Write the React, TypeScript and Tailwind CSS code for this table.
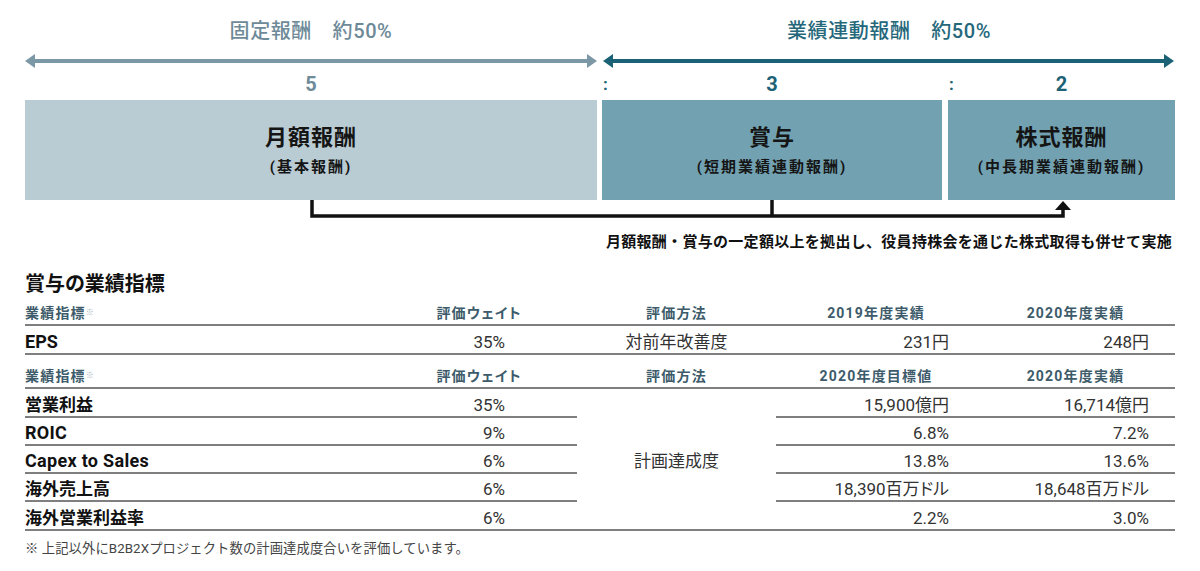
import React from "react";

function Arrow({ w, color }: { w: number; color: string }) {
  return (
    <svg width={w} height={14} viewBox={`0 0 ${w} 14`} className="block">
      <rect x={8} y={5} width={w - 16} height={4} fill={color} />
      <polygon points={`0,7 10,0 10,14`} fill={color} />
      <polygon points={`${w},7 ${w - 10},0 ${w - 10},14`} fill={color} />
    </svg>
  );
}

const grid = "grid grid-cols-[410px_142px_199px_200px_199px]";
const line = "border-b-2 border-[#7f7f7f]";
const hdr = "text-[14px] leading-[20px] font-bold tracking-[1.2px] text-[#3d5b6a]";
const lbl = "text-[17px] leading-[22px] font-bold text-[#111]";
const val = "text-[17px] leading-[22px] text-[#333]";

function Mark() {
  return <span className="text-[8px] align-top text-[#a3b3bb] tracking-normal">※</span>;
}

const rows = [
  ["営業利益", "35%", "15,900億円", "16,714億円", false],
  ["ROIC", "9%", "6.8%", "7.2%", true],
  ["Capex to Sales", "6%", "13.8%", "13.6%", true],
  ["海外売上高", "6%", "18,390百万ドル", "18,648百万ドル", false],
  ["海外営業利益率", "6%", "2.2%", "3.0%", false],
] as const;

export default function App() {
  return (
    <div className="w-[1200px] h-[571px] bg-white overflow-hidden font-['Roboto','Noto_Sans_CJK_JP',sans-serif] [font-feature-settings:'palt']">
      <div className="ml-[25px] w-[1150px]">
        {/* Titles */}
        <div className="flex gap-[6px] pt-[19px]">
          <div className="w-[572px] text-center text-[20px] leading-[24px] font-medium tracking-[0.6px] text-[#6e8a98]">
            固定報酬　約50%
          </div>
          <div className="w-[572px] text-center text-[20px] leading-[24px] font-medium tracking-[0.6px] text-[#26687b]">
            業績連動報酬　約50%
          </div>
        </div>

        {/* Arrows */}
        <div className="flex gap-[6px] mt-[11px]">
          <Arrow w={572} color="#7c97a5" />
          <Arrow w={571} color="#1c6276" />
        </div>

        {/* Ratio numbers */}
        <div className="flex mt-[4px] text-[20px] leading-[24px] font-bold">
          <div className="w-[572px] text-center text-[#6f8a99]">5</div>
          <div className="ml-[5px] w-[340px] flex text-[#1c6276]">
            <span className="w-[8px] pl-[1px] text-[17px]">:</span>
            <span className="flex-1 text-center">3</span>
            <span className="w-[8px]" />
          </div>
          <div className="ml-[6px] w-[227px] flex text-[#1c6276]">
            <span className="w-[8px] pl-[1px] text-[17px]">:</span>
            <span className="flex-1 text-center">2</span>
            <span className="w-[8px]" />
          </div>
        </div>

        {/* Boxes */}
        <div className="flex mt-[4px] h-[100px] text-[#151515]">
          <div className="w-[572px] bg-[#b9cbd3] flex flex-col items-center pt-[25px]">
            <div className="text-[22px] leading-[26px] font-bold tracking-[1px]">月額報酬</div>
            <div className="mt-[6px] text-[15px] leading-[20px] font-bold tracking-[2px]">(基本報酬)</div>
          </div>
          <div className="ml-[5px] w-[340px] bg-[#72a2b2] flex flex-col items-center pt-[25px]">
            <div className="text-[22px] leading-[26px] font-bold tracking-[1px]">賞与</div>
            <div className="mt-[6px] text-[15px] leading-[20px] font-bold tracking-[2px]">(短期業績連動報酬)</div>
          </div>
          <div className="ml-[6px] w-[227px] bg-[#72a2b2] flex flex-col items-center pt-[25px]">
            <div className="text-[22px] leading-[26px] font-bold tracking-[1px]">株式報酬</div>
            <div className="mt-[6px] text-[15px] leading-[20px] font-bold tracking-[2px]">(中長期業績連動報酬)</div>
          </div>
        </div>

        {/* Bracket connector */}
        <svg width={1150} height={20} viewBox="0 0 1150 20" className="block">
          <path d="M287 0 V16 H1038 V8" stroke="#111" strokeWidth={3.5} fill="none" strokeLinejoin="miter" />
          <path d="M747 0 V16" stroke="#111" strokeWidth={3.5} fill="none" />
          <polygon points="1038,1 1030,10 1046,10" fill="#111" />
        </svg>

        <div className="mt-[12px] pr-[3px] text-right text-[15px] leading-[20px] font-bold tracking-[0.3px] text-[#111] [font-feature-settings:normal]">
          月額報酬・賞与の一定額以上を拠出し、役員持株会を通じた株式取得も併せて実施
        </div>

        {/* Section title */}
        <div className="mt-[19px] text-[20px] leading-[26px] font-bold text-[#111]">賞与の業績指標</div>

        {/* Table 1 */}
        <div className={`${grid} grid-rows-[29px_29px]`}>
          <div className={`${line} ${hdr} flex items-center pt-[4px]`}>
            <span>
              業績指標
              <Mark />
            </span>
          </div>
          <div className={`${line} ${hdr} flex items-center justify-center pt-[4px] pr-[54px]`}>評価ウェイト</div>
          <div className={`${line} ${hdr} flex items-center justify-center pt-[4px]`}>評価方法</div>
          <div className={`${line} ${hdr} flex items-center justify-center pt-[4px]`}>2019年度実績</div>
          <div className={`${line} ${hdr} flex items-center justify-center pt-[4px]`}>2020年度実績</div>

          <div className={`${line} text-[18px] leading-[22px] font-bold text-[#111] flex items-center pt-[4px]`}>EPS</div>
          <div className={`${line} ${val} flex items-center justify-end pt-[4px] pr-[72px]`}>35%</div>
          <div className={`${line} ${val} flex items-center justify-center pt-[4px]`}>対前年改善度</div>
          <div className={`${line} ${val} flex items-center justify-end pt-[4px] pr-[27px]`}>231円</div>
          <div className={`${line} ${val} flex items-center justify-end pt-[4px] pr-[26px]`}>248円</div>
        </div>

        {/* Table 2 */}
        <div className={`${grid} grid-rows-[34px_29px_28px_28px_28px_29px]`}>
          <div className={`${line} ${hdr} flex items-center pt-[10px]`}>
            <span>
              業績指標
              <Mark />
            </span>
          </div>
          <div className={`${line} ${hdr} flex items-center justify-center pt-[10px] pr-[54px]`}>評価ウェイト</div>
          <div className={`${line} ${hdr} flex items-center justify-center pt-[10px]`}>評価方法</div>
          <div className={`${line} ${hdr} flex items-center justify-center pt-[10px]`}>2020年度目標値</div>
          <div className={`${line} ${hdr} flex items-center justify-center pt-[10px]`}>2020年度実績</div>

          {rows.map((r, i) => (
            <React.Fragment key={r[0]}>
              <div
                className={`${line} ${
                  r[4] ? "text-[18px] leading-[22px] font-bold text-[#111] tracking-[0.3px]" : lbl
                } col-start-1 flex items-center pt-[4px]`}
              >
                {r[0]}
              </div>
              <div className={`${line} ${val} col-start-2 flex items-center justify-end pt-[4px] pr-[72px]`}>{r[1]}</div>
              {i === 0 && (
                <div className={`${line} ${val} col-start-3 row-span-5 flex items-center justify-center pt-[4px]`}>
                  計画達成度
                </div>
              )}
              <div className={`${line} ${val} col-start-4 flex items-center justify-end pt-[4px] pr-[27px]`}>{r[2]}</div>
              <div className={`${line} ${val} col-start-5 flex items-center justify-end pt-[4px] pr-[26px]`}>{r[3]}</div>
            </React.Fragment>
          ))}
        </div>

        <div className="mt-[9px] text-[13.3px] leading-[18px] tracking-[0.1px] text-[#444] [font-feature-settings:normal]">
          ※ 上記以外にB2B2Xプロジェクト数の計画達成度合いを評価しています。
        </div>
      </div>
    </div>
  );
}
